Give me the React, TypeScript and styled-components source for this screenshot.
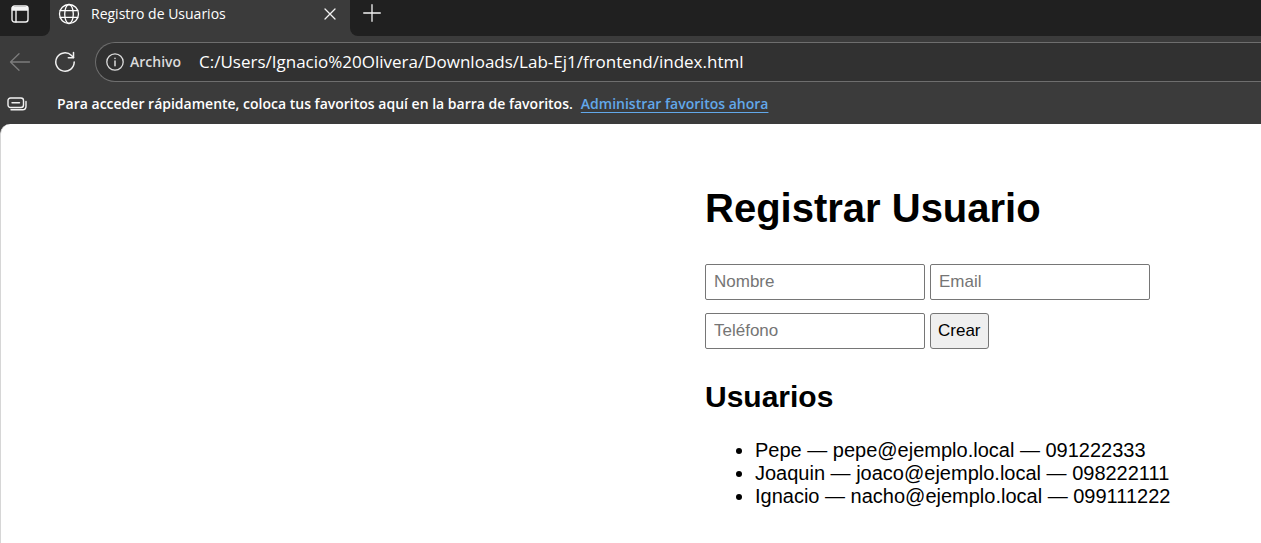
import React from "react";
import styled, { createGlobalStyle } from "styled-components";

const GlobalStyle = createGlobalStyle`
  * { box-sizing: border-box; }
  html, body, #root { height: 100%; }
  body { margin: 0; background: #3b3b3b; }
`;

const Browser = styled.div`
  display: flex;
  flex-direction: column;
  min-height: 100%;
  background: #3b3b3b;
  color: #fff;
  font-family: "Segoe UI", "Open Sans", "Noto Sans", sans-serif;
`;

const TabStrip = styled.header`
  display: flex;
  height: 36px;
  background: #3b3b3b;
`;

const StripEnd = styled.div<{ $side: "left" | "right" }>`
  display: flex;
  align-items: flex-start;
  background: #202020;
  ${({ $side }) =>
    $side === "left"
      ? "width: 50px; padding: 1px 0 0 7px; border-bottom-right-radius: 8px;"
      : "flex: 1; padding: 0 0 0 9px; border-bottom-left-radius: 8px;"}
`;

const Tab = styled.div`
  display: flex;
  align-items: center;
  width: 300px;
  height: 28px;
  padding: 0 7px;
`;

const TabTitle = styled.span`
  flex: 1;
  margin-left: 10px;
  font-size: 14px;
  line-height: 20px;
  white-space: nowrap;
`;

const IconButton = styled.button<{ $dim?: boolean }>`
  display: flex;
  align-items: center;
  justify-content: center;
  flex: none;
  width: 26px;
  height: 26px;
  padding: 0;
  border: 0;
  background: transparent;
  color: ${({ $dim }) => ($dim ? "#7c7c7c" : "#f2f2f2")};
`;

const Icon = styled.svg`
  display: block;
  flex: none;
  fill: none;
  stroke: currentColor;
  stroke-linecap: round;
  stroke-linejoin: round;
`;

const Toolbar = styled.nav`
  display: flex;
  align-items: center;
  height: 52px;
  padding-left: 7px;
`;

const ReloadSlot = styled.div`
  margin: 0 17px 0 19px;
`;

const AddressBar = styled.div`
  display: flex;
  align-items: center;
  flex: 1;
  height: 40px;
  padding-left: 10px;
  border: 1px solid #6e6e6e;
  border-right: 0;
  border-radius: 20px 0 0 20px;
  background: #313131;
`;

const Scheme = styled.span`
  width: 75px;
  padding-left: 6px;
  color: #dcdcdc;
  font-size: 14px;
  font-weight: 600;
  line-height: 20px;
`;

const AddressInput = styled.input`
  flex: 1;
  min-width: 0;
  padding: 0;
  border: 0;
  outline: 0;
  background: transparent;
  color: #fff;
  font-family: inherit;
  font-size: 17px;
  line-height: 24px;
`;

const FavoritesBar = styled.div`
  display: flex;
  align-items: center;
  height: 36px;
  padding: 0 0 4px 4px;
  font-size: 14px;
  font-weight: 600;
  line-height: 20px;
  white-space: nowrap;
`;

const FavoritesText = styled.span`
  margin: 0 8px 0 27px;
`;

const FavoritesLink = styled.a`
  color: #62a8ea;
  text-decoration: underline;
  text-underline-offset: 3px;
`;

const Page = styled.main`
  display: grid;
  grid-template-columns: 704fr 556fr;
  flex: 1;
  border-left: 1px solid #d6d6d6;
  border-top-left-radius: 10px;
  background: #fff;
  color: #000;
  font-family: Arial, "Liberation Sans", sans-serif;
  font-size: 20px;
  line-height: 23px;
`;

const Content = styled.div`
  grid-column: 2;
  padding-top: 60px;
`;

const Heading = styled.h1`
  margin: 0 0 32px;
  font-size: 40px;
  line-height: 48px;
`;

const SubHeading = styled.h2`
  margin: 30px 0 24px;
  font-size: 30px;
  line-height: 36px;
`;

const Form = styled.form`
  display: flex;
  flex-wrap: wrap;
  gap: 13px 5px;
  max-width: 480px;
`;

const Field = styled.input`
  width: 220px;
  height: 36px;
  padding: 0 8px;
  border: 1px solid #767676;
  border-radius: 2px;
  background: #fff;
  font-family: inherit;
  font-size: 17px;
  &::placeholder { color: #757575; opacity: 1; }
`;

const Submit = styled.button`
  height: 36px;
  padding: 0 7px;
  border: 1px solid #767676;
  border-radius: 3px;
  background: #efefef;
  color: #000;
  font-family: inherit;
  font-size: 17px;
`;

const UserList = styled.ul`
  margin: 0;
  padding-left: 50px;
`;

const fields = [
  { name: "nombre", label: "Nombre", type: "text" },
  { name: "email", label: "Email", type: "email" },
  { name: "telefono", label: "Teléfono", type: "tel" },
];

const users = [
  { name: "Pepe", email: "pepe@ejemplo.local", phone: "091222333" },
  { name: "Joaquin", email: "joaco@ejemplo.local", phone: "098222111" },
  { name: "Ignacio", email: "nacho@ejemplo.local", phone: "099111222" },
];

export default function App() {
  return (
    <Browser>
      <GlobalStyle />
      <TabStrip>
        <StripEnd $side="left">
          <IconButton aria-label="Acciones de pestañas">
            <Icon width="18" height="18" viewBox="0 0 18 18" strokeWidth="1.4">
              <rect x="1" y="1" width="16" height="16" rx="2.5" />
              <path d="M1.5 2.5h15v2.5h-15z" fill="currentColor" />
              <path d="M5 5v12" />
            </Icon>
          </IconButton>
        </StripEnd>
        <Tab>
          <Icon width="24" height="24" viewBox="0 0 24 24" strokeWidth="1.3">
            <circle cx="12" cy="12" r="9.5" />
            <ellipse cx="12" cy="12" rx="4.3" ry="9.5" />
            <path d="M3.2 8.7h17.6M3.2 15.3h17.6" />
          </Icon>
          <TabTitle>Registro de Usuarios</TabTitle>
          <IconButton aria-label="Cerrar pestaña">
            <Icon width="12" height="12" viewBox="0 0 12 12" strokeWidth="1.3">
              <path d="M1 1l10 10M11 1L1 11" />
            </Icon>
          </IconButton>
        </Tab>
        <StripEnd $side="right">
          <IconButton aria-label="Nueva pestaña">
            <Icon width="18" height="18" viewBox="0 0 18 18" strokeWidth="1.3">
              <path d="M9 .7v16.6M.7 9h16.6" />
            </Icon>
          </IconButton>
        </StripEnd>
      </TabStrip>
      <Toolbar>
        <IconButton $dim aria-label="Atrás">
          <Icon width="22" height="20" viewBox="0 0 22 20" strokeWidth="1.3">
            <path d="M20.5 10H1.500M10 1.700L1.500 10l8.500 8.300" />
          </Icon>
        </IconButton>
        <ReloadSlot>
          <IconButton aria-label="Actualizar">
            <Icon width="22" height="22" viewBox="0 0 22 22" strokeWidth="1.5">
              <path d="M20.2 11a9.200 9.200 0 1 1-2.700-6.500l2 2" />
              <path d="M19.5 1.500v5.200h-5.200" />
            </Icon>
          </IconButton>
        </ReloadSlot>
        <AddressBar>
          <Icon width="18" height="18" viewBox="0 0 18 18" strokeWidth="1.3" color="#dcdcdc">
            <circle cx="9" cy="9" r="8.2" />
            <path d="M9 8v4.800M9 5.300v.2" strokeWidth="1.5" />
          </Icon>
          <Scheme>Archivo</Scheme>
          <AddressInput
            aria-label="Dirección"
            defaultValue="C:/Users/Ignacio%20Olivera/Downloads/Lab-Ej1/frontend/index.html"
          />
        </AddressBar>
      </Toolbar>
      <FavoritesBar>
        <IconButton aria-label="Favoritos">
          <Icon width="20" height="14" viewBox="0 0 20 14" strokeWidth="1.4">
            <rect x="1" y="1" width="15.5" height="9.5" rx="2.5" />
            <path d="M5 5.700h7.500M4 12.800h11.500q3.500 0 3.500-3.500V4.500" />
          </Icon>
        </IconButton>
        <FavoritesText>
          Para acceder rápidamente, coloca tus favoritos aquí en la barra de favoritos.
        </FavoritesText>
        <FavoritesLink href="#favoritos">Administrar favoritos ahora</FavoritesLink>
      </FavoritesBar>
      <Page>
        <Content>
          <Heading>Registrar Usuario</Heading>
          <Form onSubmit={(e) => e.preventDefault()}>
            {fields.map((f) => (
              <Field key={f.name} name={f.name} type={f.type} placeholder={f.label} aria-label={f.label} />
            ))}
            <Submit type="submit">Crear</Submit>
          </Form>
          <SubHeading>Usuarios</SubHeading>
          <UserList>
            {users.map((u) => (
              <li key={u.phone}>{`${u.name} — ${u.email} — ${u.phone}`}</li>
            ))}
          </UserList>
        </Content>
      </Page>
    </Browser>
  );
}
